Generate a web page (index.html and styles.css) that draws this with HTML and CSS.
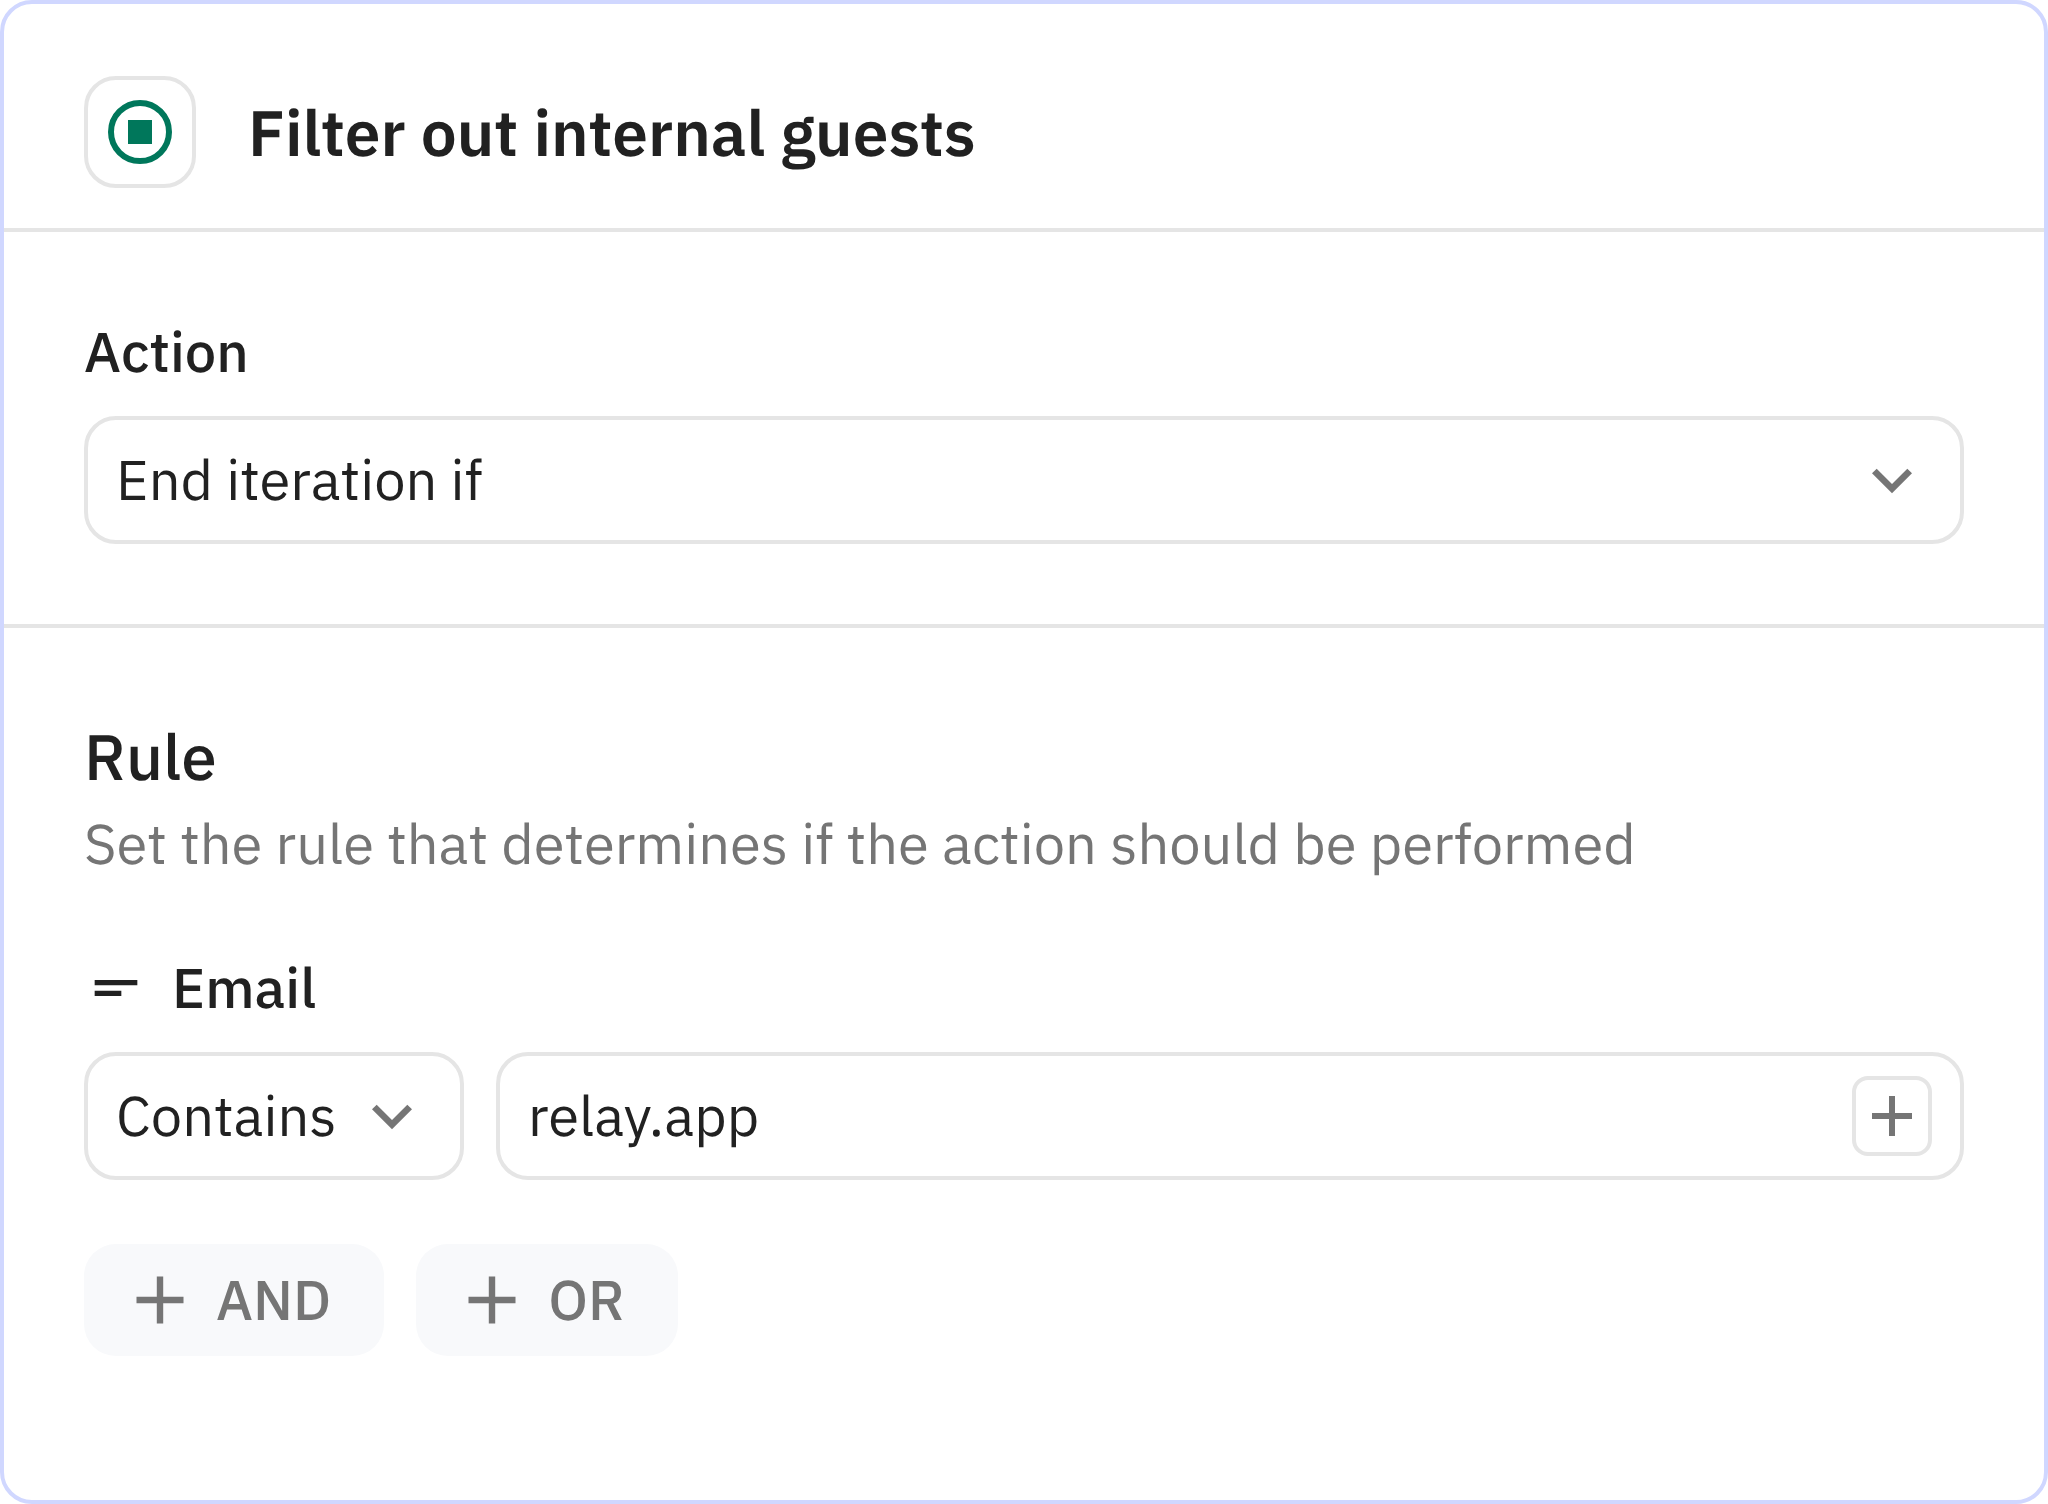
FILE: index.html
```html
<!DOCTYPE html>
<html lang="en">

<head>
<meta charset="utf-8">
<meta name="viewport" content="width=device-width, initial-scale=1">
<title>Filter out internal guests</title>
<link rel="stylesheet" href="styles.css">
</head>

<body>

<form class="card">
	<header class="card-header">
		<span class="step-icon">
			<svg width="64" height="64" viewBox="0 0 64 64" aria-hidden="true">
				<circle cx="32" cy="32" r="29" fill="none" stroke="currentColor" stroke-width="6"/>
				<rect x="20" y="20" width="24" height="24" fill="currentColor"/>
			</svg>
		</span>
		<h1 class="title">Filter out internal guests</h1>
	</header>

	<section class="section">
		<label class="label" for="action">Action</label>
		<div class="select">
			<select id="action">
				<option>End iteration if</option>
				<option>Continue if</option>
			</select>
			<svg class="chevron" viewBox="0 0 24 24" aria-hidden="true">
				<path d="M16.59 8.59 12 13.17 7.41 8.59 6 10l6 6 6-6z" fill="currentColor"/>
			</svg>
		</div>
	</section>

	<section class="section">
		<h2 class="subtitle">Rule</h2>
		<p class="description">Set the rule that determines if the action should be performed</p>

		<label class="label" for="email">
			<svg width="64" height="64" viewBox="0 0 24 24" aria-hidden="true">
				<path d="M4 9h16v2H4zM4 13h10v2H4z" fill="currentColor"/>
			</svg>
			Email
		</label>
		<div class="rule">
			<div class="select select-operator">
				<select aria-label="Operator">
					<option>Contains</option>
					<option>Equals</option>
				</select>
				<svg class="chevron" viewBox="0 0 24 24" aria-hidden="true">
					<path d="M16.59 8.59 12 13.17 7.41 8.59 6 10l6 6 6-6z" fill="currentColor"/>
				</svg>
			</div>
			<div class="field">
				<input id="email" type="text" value="relay.app">
				<button class="insert" type="button" aria-label="Insert variable">
					<svg width="40" height="40" viewBox="0 0 40 40" aria-hidden="true">
						<path d="M20 0v40M0 20h40" stroke="currentColor" stroke-width="6"/>
					</svg>
				</button>
			</div>
		</div>

		<div class="actions">
			<button class="add" type="button">
				<svg width="64" height="64" viewBox="0 0 64 64" aria-hidden="true">
					<path d="M32 8.500v47M8.500 32h47" stroke="currentColor" stroke-width="6.400"/>
				</svg>
				AND
			</button>
			<button class="add" type="button">
				<svg width="64" height="64" viewBox="0 0 64 64" aria-hidden="true">
					<path d="M32 8.500v47M8.500 32h47" stroke="currentColor" stroke-width="6.400"/>
				</svg>
				OR
			</button>
		</div>
	</section>
</form>

</body>

</html>
```

FILE: styles.css
```css
* {
	box-sizing: border-box;
}
body {
	margin: 0;
	background: #fff;
	color: #212121;
	font-family: "IBM Plex Sans", "Noto Sans", sans-serif;
	font-size: 56px;
	line-height: 80px;
	text-rendering: geometricPrecision;
}
svg {
	display: block;
	flex: none;
}
input, select, button {
	margin: 0;
	font: inherit;
	color: inherit;
	text-rendering: inherit;
}
.card {
	min-height: 100vh;
	border: 4px solid #d0d7ff;
	border-radius: 32px;
}
.card-header {
	display: flex;
	align-items: center;
	gap: 52px;
	padding: 72px 80px 40px;
}
.step-icon {
	display: flex;
	flex: none;
	padding: 20px;
	border: 4px solid #e5e5e5;
	border-radius: 32px;
	color: #00775b;
}
.title {
	margin: 0;
	font-size: 64px;
	font-weight: 600;
}
.section {
	padding: 80px;
	border-top: 4px solid #e5e5e5;
}
.label {
	display: flex;
	align-items: center;
	gap: 24px;
	margin-bottom: 24px;
	font-weight: 500;
}
.subtitle {
	margin: 0;
	font-size: 64px;
	font-weight: 500;
	line-height: 96px;
}
.description {
	margin: 0 0 64px;
	color: #757575;
}
.select {
	position: relative;
}
.select select {
	display: block;
	width: 100%;
	height: 128px;
	padding: 0 112px 0 28px;
	border: 4px solid #e5e5e5;
	border-radius: 32px;
	background: #fff;
	appearance: none;
}
.select-operator {
	flex: none;
	width: 380px;
}
.chevron {
	position: absolute;
	top: 24px;
	right: 32px;
	width: 80px;
	height: 80px;
	color: #757575;
	pointer-events: none;
}
.rule {
	display: flex;
	gap: 32px;
}
.field {
	display: flex;
	flex: 1;
	align-items: center;
	min-width: 0;
	height: 128px;
	padding: 0 28px;
	border: 4px solid #e5e5e5;
	border-radius: 32px;
}
.field input {
	flex: 1;
	min-width: 0;
	padding: 0;
	border: 0;
	outline: 0;
	background: none;
}
.insert {
	padding: 16px;
	border: 4px solid #e5e5e5;
	border-radius: 16px;
	background: #fff;
	color: #757575;
}
.actions {
	display: flex;
	gap: 32px;
	margin-top: 64px;
}
.add {
	display: flex;
	align-items: center;
	gap: 24px;
	height: 112px;
	padding: 0 53px 0 44px;
	border: 0;
	border-radius: 32px;
	background: #f8f9fb;
	color: #757575;
	font-weight: 500;
}
```
